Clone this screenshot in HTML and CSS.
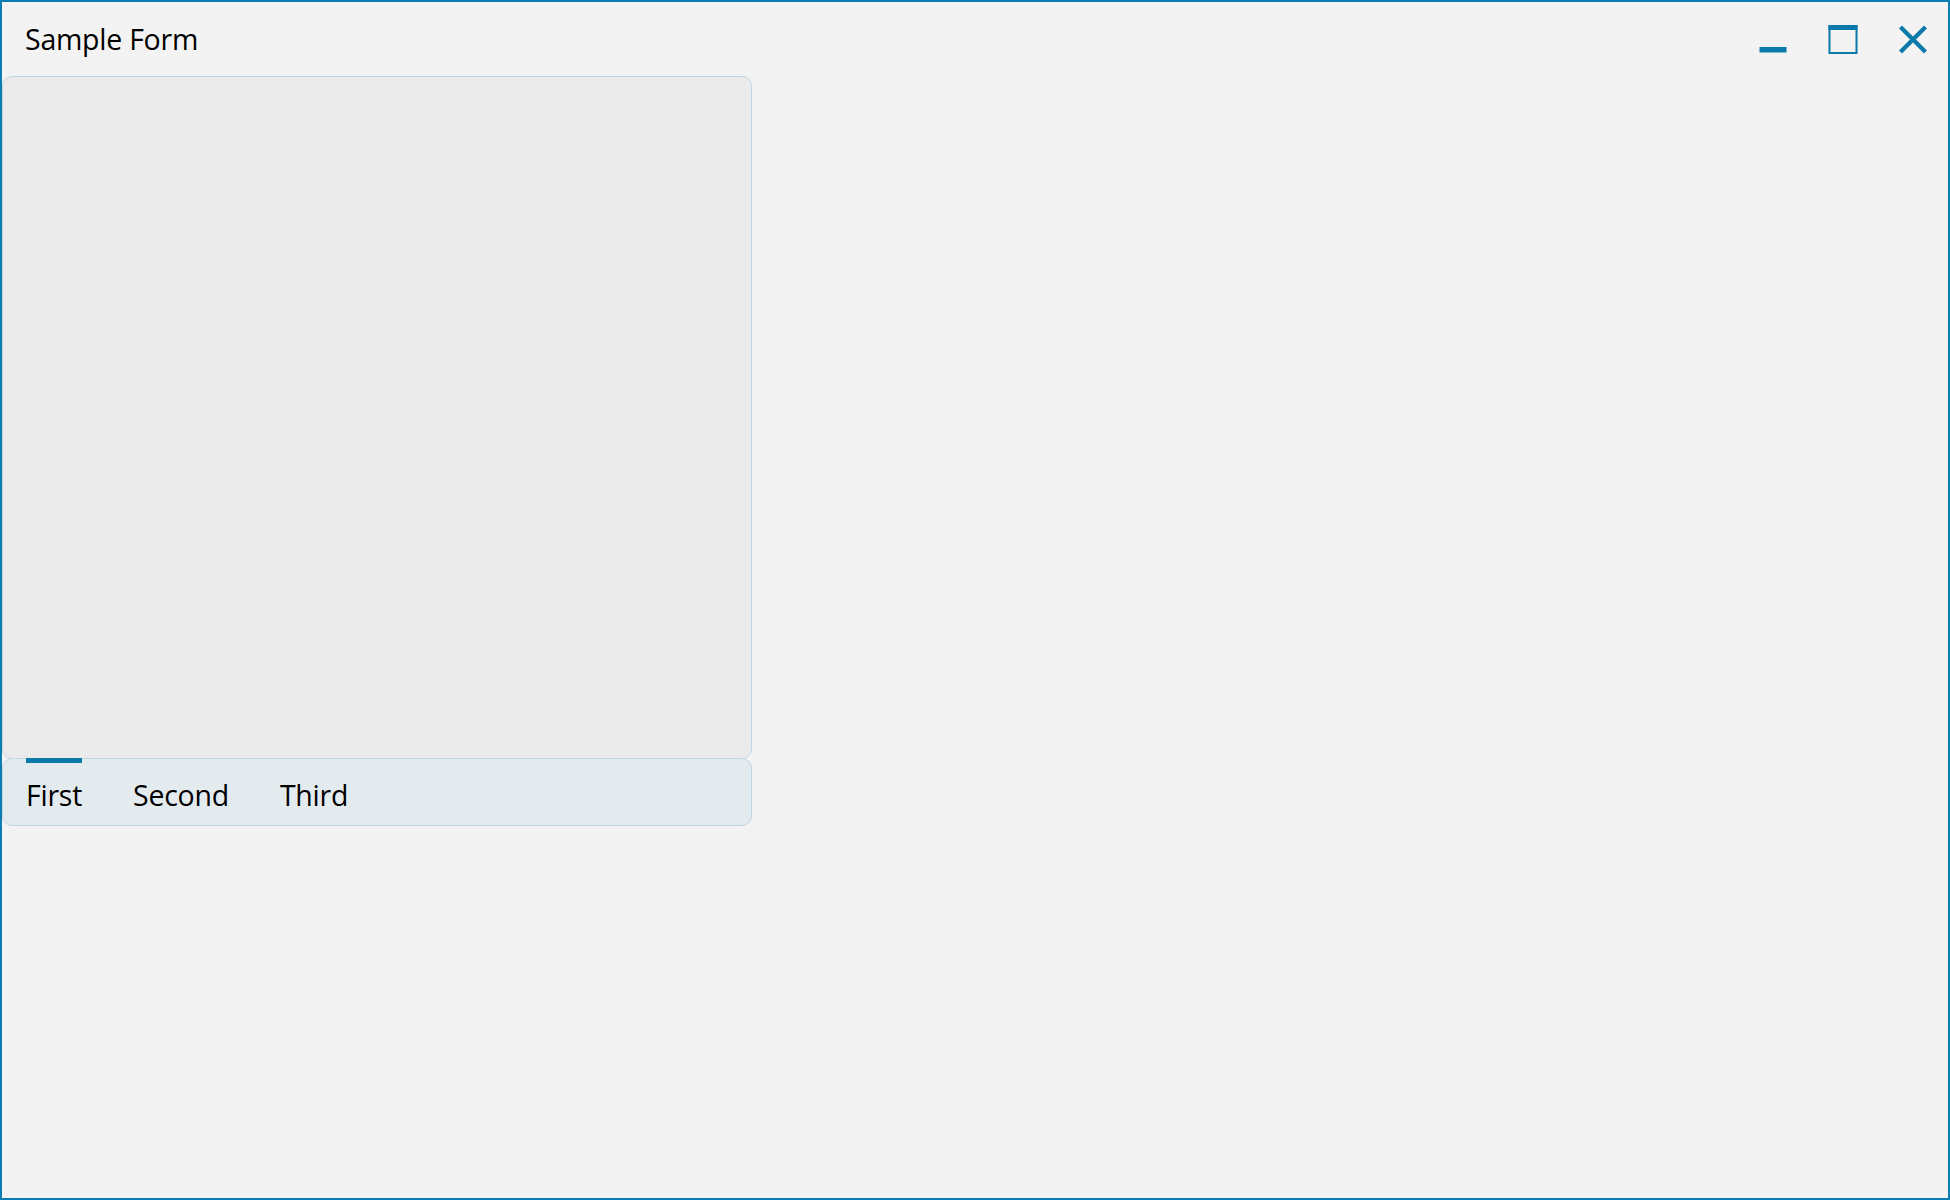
FILE: index.html
```html
<!DOCTYPE html>
<html>
<head>
<meta charset="utf-8">
<title>Sample Form</title>
<link rel="stylesheet" href="styles.css">
</head>
<body>
<div class="window">
  <div class="titlebar">
    <div class="title">Sample Form</div>
    <div class="controls">
      <div class="ctl">
        <svg width="30" height="30" viewBox="0 0 30 30"><rect x="1.5" y="23" width="27" height="5.5" fill="#0b79a9"/></svg>
      </div>
      <div class="ctl">
        <svg width="30" height="30" viewBox="0 0 30 30"><rect x="1.5" y="2" width="27" height="27" fill="none" stroke="#0b79a9" stroke-width="2"/><rect x="0.5" y="1" width="29" height="5" fill="#0b79a9"/></svg>
      </div>
      <div class="ctl">
        <svg width="30" height="30" viewBox="0 0 30 30"><path d="M2.5 3 L27.5 28 M27.5 3 L2.5 28" stroke="#0b79a9" stroke-width="4.2" fill="none"/></svg>
      </div>
    </div>
  </div>
  <div class="tabview">
    <div class="tabcontent"></div>
    <div class="tabstrip">
      <div class="tab active">First</div>
      <div class="tab">Second</div>
      <div class="tab">Third</div>
    </div>
  </div>
</div>
</body>
</html>
```
FILE: styles.css
```css
html, body {
  margin: 0;
  padding: 0;
  background: #f3f3f3;
}
.window {
  box-sizing: border-box;
  width: 1950px;
  height: 1200px;
  border: 2px solid #0c7db0;
  background: #f3f3f3;
  font-family: "Open Sans", "Noto Sans", sans-serif;
  color: #000;
  display: flex;
  flex-direction: column;
}
.titlebar {
  height: 74px;
  display: flex;
  align-items: flex-start;
  justify-content: space-between;
}
.title {
  font-size: 28.5px;
  padding-left: 23px;
  padding-top: 18px;
  line-height: 38px;
  letter-spacing: -0.25px;
}
.controls {
  display: flex;
  padding-top: 22px;
}
.ctl {
  width: 70px;
  display: flex;
  justify-content: center;
}
.ctl svg {
  display: block;
}
.tabview {
  width: 750px;
  display: flex;
  flex-direction: column;
}
.tabcontent {
  box-sizing: border-box;
  height: 683px;
  background: #ebebeb;
  border: 1px solid #bfd6e2;
  border-radius: 10px;
}
.tabstrip {
  box-sizing: border-box;
  height: 68px;
  margin-top: -1px;
  background: #e4ebef;
  border: 1px solid #bfd6e2;
  border-radius: 10px;
  display: flex;
  align-items: flex-start;
  padding-left: 23px;
  gap: 51px;
}
.tab {
  position: relative;
  font-size: 28.5px;
  line-height: 38px;
  padding-top: 17px;
  letter-spacing: -0.25px;
}
.tab.active::before {
  content: "";
  position: absolute;
  left: 0;
  right: 0;
  top: -1px;
  height: 5px;
  background: #0b79a9;
}
```
